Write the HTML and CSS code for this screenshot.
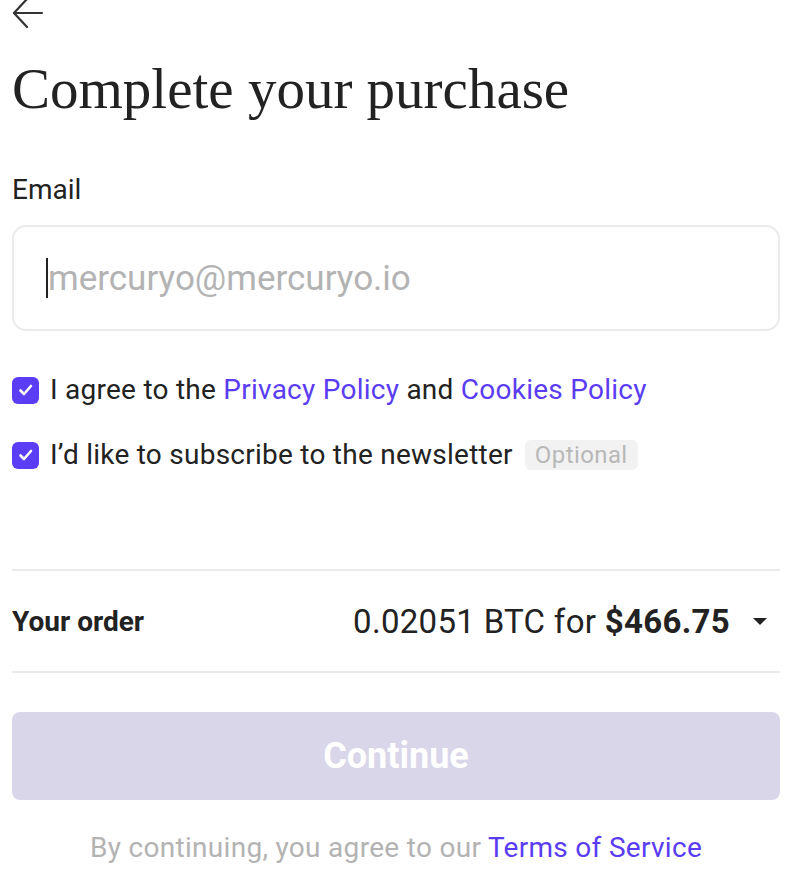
FILE: index.html
```html
<!DOCTYPE html>
<html lang="en">
  <head>
    <meta charset="utf-8">
    <title>Complete your purchase</title>
    <meta name="viewport" content="width=device-width, initial-scale=1">
    <link rel="stylesheet" href="styles.css">
  </head>
  <body>
    <main class="checkout">
      <button type="button" class="back" aria-label="Back">
        <svg width="32" height="32" viewBox="0 0 32 32" fill="none" stroke="#333" stroke-width="2.2" stroke-linecap="round" stroke-linejoin="round">
          <path d="M30 16H2"/>
          <path d="M15 2L2 16l13 14"/>
        </svg>
      </button>

      <h1 class="title">Complete your purchase</h1>

      <form class="form">
        <label class="label" for="email">Email</label>
        <div class="field">
          <span class="caret"></span>
          <input id="email" class="input" type="email" placeholder="mercuryo@mercuryo.io">
        </div>

        <label class="check">
          <span class="box">
            <svg width="18" height="18" viewBox="0 0 18 18" fill="none" stroke="#fff" stroke-width="2.6" stroke-linecap="round" stroke-linejoin="round"><path d="M3.5 9.5l3.5 3.5 7-8"/></svg>
          </span>
          <span>I agree to the <a href="#">Privacy Policy</a> and <a href="#">Cookies Policy</a></span>
        </label>

        <label class="check">
          <span class="box">
            <svg width="18" height="18" viewBox="0 0 18 18" fill="none" stroke="#fff" stroke-width="2.6" stroke-linecap="round" stroke-linejoin="round"><path d="M3.5 9.5l3.5 3.5 7-8"/></svg>
          </span>
          <span>I’d like to subscribe to the newsletter</span>
          <span class="badge">Optional</span>
        </label>
      </form>

      <div class="order">
        <span class="order-label">Your order</span>
        <span class="order-sum">0.02051 BTC for <b>$466.75</b></span>
        <span class="drop"></span>
      </div>

      <button type="button" class="continue" disabled>Continue</button>

      <p class="terms">By continuing, you agree to our <a href="#">Terms of Service</a></p>
    </main>
  </body>
</html>
```

FILE: styles.css
```css
body {
  margin: 0;
  background: #fff;
  color: #222;
  font-family: Roboto, "Liberation Sans", sans-serif;
}
a {
  color: #5a3cf2;
  text-decoration: none;
}
.checkout {
  padding: 0 30px 0 12px;
  display: flex;
  flex-direction: column;
}
.back {
  margin-top: -3px;
  padding: 0;
  border: 0;
  background: none;
  width: 32px;
  height: 32px;
  align-self: flex-start;
}
.title {
  margin: 27px 0 0;
  font-family: "Liberation Serif", serif;
  font-weight: 400;
  font-size: 57px;
  line-height: 66px;
  color: #222;
}
.form {
  display: flex;
  flex-direction: column;
}
.label {
  margin-top: 51px;
  font-size: 28px;
  line-height: 34px;
  color: #222;
}
.field {
  margin-top: 18px;
  height: 106px;
  border: 2px solid #ebebeb;
  border-radius: 14px;
  box-sizing: border-box;
  display: flex;
  align-items: center;
  padding-left: 32px;
}
.caret {
  width: 2px;
  height: 40px;
  background: #222;
}
.input {
  flex: 1;
  border: 0;
  outline: none;
  padding: 0;
  font-family: inherit;
  font-size: 35px;
  color: #222;
  background: none;
}
.input::placeholder {
  color: #b3b3b3;
}
.check {
  display: flex;
  align-items: center;
  gap: 11px;
  font-size: 28px;
  line-height: 34px;
  letter-spacing: 0.25px;
  color: #222;
  margin-top: 42px;
}
.check + .check {
  margin-top: 31px;
}
.box {
  width: 27px;
  height: 27px;
  border-radius: 6px;
  background: #5b3df5;
  display: flex;
  align-items: center;
  justify-content: center;
  flex: none;
}
.badge {
  margin-left: 1px;
  background: #f2f2f2;
  color: #b8b8b8;
  font-size: 24px;
  line-height: 30px;
  letter-spacing: 0.4px;
  padding: 0 10px;
  border-radius: 6px;
}
.order {
  margin-top: 97px;
  border-top: 2px solid #ebebeb;
  border-bottom: 2px solid #ebebeb;
  height: 104px;
  box-sizing: border-box;
  display: flex;
  align-items: center;
  font-size: 33px;
  letter-spacing: 0.3px;
}
.order-label {
  font-weight: 700;
  font-size: 28px;
  letter-spacing: 0;
  flex: 1;
}
.order-sum b {
  font-weight: 700;
}
.drop {
  margin: 0 13px 0 23px;
  width: 0;
  height: 0;
  border-left: 7px solid transparent;
  border-right: 7px solid transparent;
  border-top: 7px solid #222;
}
.continue {
  margin-top: 39px;
  height: 88px;
  border: 0;
  border-radius: 8px;
  background: #d9d6ea;
  color: #fff;
  font-family: inherit;
  font-weight: 700;
  font-size: 36px;
}
.terms {
  margin: 31px 0 0;
  text-align: center;
  font-size: 28px;
  line-height: 34px;
  letter-spacing: 0.3px;
  color: #b3b3b3;
}
```
